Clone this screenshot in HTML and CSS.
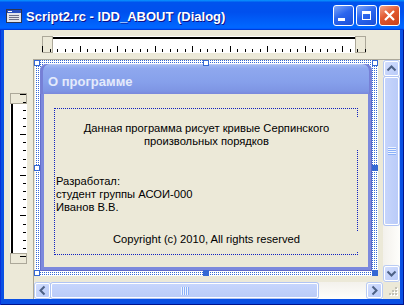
FILE: index.html
```html
<!DOCTYPE html>
<html lang="ru">
<head>
  <meta charset="UTF-8" />
  <title>Script2.rc - IDD_ABOUT (Dialog)</title>
  <link rel="stylesheet" href="styles.css">
</head>
<body>

  <div class="window">

    <!-- Title bar -->
    <div class="titlebar">
      <svg class="app-icon" width="16" height="16" viewBox="0 0 16 16" shape-rendering="crispEdges">
        <rect x="0.5" y="1.5" width="15" height="13" fill="#E4E4EA" stroke="#2E3550"/>
        <rect x="1" y="2" width="14" height="3" fill="#2A4FBE"/>
        <rect x="2" y="3" width="4" height="1" fill="#fff"/>
        <rect x="3" y="7" width="10" height="1" fill="#6E7088"/>
        <rect x="3" y="9" width="10" height="1" fill="#6E7088"/>
        <rect x="3" y="11" width="10" height="1" fill="#6E7088"/>
      </svg>
      <span class="title">Script2.rc - IDD_ABOUT (Dialog)</span>
      <div class="caption-buttons">
        <div class="cap-btn"><span class="glyph-min"></span></div>
        <div class="cap-btn"><span class="glyph-max"></span></div>
        <div class="cap-btn close">
          <svg width="21" height="21" viewBox="0 0 21 21">
            <path d="M6 6l9 9M15 6l-9 9" stroke="#fff" stroke-width="2.2" fill="none"/>
          </svg>
        </div>
      </div>
    </div>

    <!-- Client -->
    <div class="client">
      <div class="corner"></div>

      <div class="hruler-cell">
        <svg class="hruler" width="324" height="17" viewBox="0 0 324 17" shape-rendering="crispEdges">
          <defs>
            <pattern id="hticks" width="75" height="17" patternUnits="userSpaceOnUse">
              <path fill="#000" d="M0 10h1v6h-1z M8 13h1v3h-1z M15 13h1v3h-1z M23 13h1v3h-1z M30 13h1v3h-1z M38 10h1v6h-1z M45 13h1v3h-1z M53 13h1v3h-1z M60 13h1v3h-1z M68 13h1v3h-1z"/>
            </pattern>
          </defs>
          <rect width="324" height="17" fill="#fff"/>
          <rect x="0.5" y="0.5" width="10" height="16" fill="#ECE9D8" stroke="#ACA899"/>
          <rect x="313.5" y="0.5" width="10" height="16" fill="#ECE9D8" stroke="#ACA899"/>
          <rect x="11" y="1" width="302" height="2" fill="#000"/>
          <rect width="324" height="17" fill="url(#hticks)"/>
        </svg>
      </div>

      <div class="vruler-cell">
        <svg class="vruler" width="17" height="171" viewBox="0 0 17 171" shape-rendering="crispEdges">
          <rect width="17" height="171" fill="#fff"/>
          <rect x="0.5" y="0.5" width="16" height="10" fill="#ECE9D8" stroke="#ACA899"/>
          <rect x="0.5" y="160.5" width="16" height="10" fill="#ECE9D8" stroke="#ACA899"/>
          <rect x="1" y="11" width="2" height="149" fill="#000"/>
          <path fill="#000" d="M10 1h6v1h-6z M13 9h3v1h-3z M13 17h3v1h-3z M13 25h3v1h-3z M13 33h3v1h-3z M10 41h6v1h-6z M13 49h3v1h-3z M13 57h3v1h-3z M13 66h3v1h-3z M13 74h3v1h-3z M10 82h6v1h-6z M13 90h3v1h-3z M13 98h3v1h-3z M13 106h3v1h-3z M13 114h3v1h-3z M10 122h6v1h-6z M13 131h3v1h-3z M13 139h3v1h-3z M13 147h3v1h-3z M13 155h3v1h-3z M10 163h6v1h-6z"/>
        </svg>
      </div>

      <!-- Editor view -->
      <div class="view">
        <div class="canvas">
          <div class="selection">
            <span class="handle h-tl"></span>
            <span class="handle h-tm"></span>
            <span class="handle h-tr"></span>
            <span class="handle h-ml"></span>
            <span class="handle h-bl"></span>
            <span class="handle filled h-mr"></span>
            <span class="handle filled h-bm"></span>
            <span class="handle filled h-br"></span>

            <div class="dialog">
              <div class="dlg-caption">О программе</div>
              <div class="dlg-body">
                <div class="group"></div>
                <p class="static s-about">Данная программа рисует кривые Серпинского<br>произвольных порядков</p>
                <p class="static s-author">Разработал:<br>студент группы АСОИ-000<br>Иванов В.В.</p>
                <p class="static s-copy">Copyright (c) 2010, All rights reserved</p>
              </div>
            </div>
          </div>
        </div>

        <div class="vscroll">
          <div class="sb-btn">
            <svg width="15" height="15" viewBox="0 0 15 15"><path d="M3.5 9.5l4-4 4 4" stroke="#4D6185" stroke-width="2" fill="none"/></svg>
          </div>
          <div class="sb-thumb v"><span class="grip-v"></span></div>
          <div class="sb-track"></div>
          <div class="sb-btn">
            <svg width="15" height="15" viewBox="0 0 15 15"><path d="M3.5 5.5l4 4 4-4" stroke="#4D6185" stroke-width="2" fill="none"/></svg>
          </div>
        </div>

        <div class="hscroll">
          <div class="sb-btn">
            <svg width="15" height="15" viewBox="0 0 15 15"><path d="M9.5 3.5l-4 4 4 4" stroke="#4D6185" stroke-width="2" fill="none"/></svg>
          </div>
          <div class="sb-thumb h"><span class="grip-h"></span></div>
          <div class="sb-track"></div>
          <div class="sb-btn">
            <svg width="15" height="15" viewBox="0 0 15 15"><path d="M5.5 3.5l4 4-4 4" stroke="#4D6185" stroke-width="2" fill="none"/></svg>
          </div>
        </div>

        <div class="size-grip">
          <svg width="17" height="17" viewBox="0 0 17 17" shape-rendering="crispEdges">
            <path fill="#fff" d="M13 6h2v2h-2z M10 9h2v2h-2z M13 9h2v2h-2z M7 12h2v2h-2z M10 12h2v2h-2z M13 12h2v2h-2z"/>
            <path fill="#C3C1B5" d="M12 5h2v2h-2z M9 8h2v2h-2z M12 8h2v2h-2z M6 11h2v2h-2z M9 11h2v2h-2z M12 11h2v2h-2z"/>
          </svg>
        </div>
      </div>
    </div>
  </div>

</body>
</html>
```

FILE: styles.css
```css
* {
  box-sizing: border-box;
  margin: 0;
  padding: 0;
}

body {
  width: 404px;
  height: 305px;
  overflow: hidden;
  font-family: 'Liberation Sans', Arial, sans-serif;
}

.window {
  width: 404px;
  height: 305px;
  display: flex;
  flex-direction: column;
  background: #0A50E4;
  box-shadow: inset 1px 0 #0831D9, inset -1px 0 #00138C, inset 0 -1px #00138C;
}

/* Title bar */
.titlebar {
  height: 30px;
  display: flex;
  align-items: center;
  padding: 1px 4px 0 6px;
  background: linear-gradient(180deg, #0997FF, #0053EE 8%, #0050EE 40%, #0066FF 88%, #0066FF 93%, #005BFF 95%, #003DD7 96%, #003DD7);
}

.app-icon {
  flex: none;
  margin-right: 4px;
}

.title {
  flex: 1;
  color: #fff;
  font-size: 13px;
  font-weight: bold;
  padding-top: 2px;
  text-shadow: 1px 1px #0F1089;
  white-space: nowrap;
}

.caption-buttons {
  display: flex;
  gap: 2px;
}

.cap-btn {
  position: relative;
  width: 21px;
  height: 21px;
  border: 1px solid #fff;
  border-radius: 3px;
  background: linear-gradient(150deg, #7EA6F8, #2C66EE 45%, #1A4ED8);
}

.cap-btn.close {
  background: linear-gradient(150deg, #F4A68C, #E2582F 45%, #C8401A);
}

.cap-btn.close svg {
  position: absolute;
  left: -1px;
  top: -1px;
}

.glyph-min {
  position: absolute;
  left: 4px;
  bottom: 4px;
  width: 7px;
  height: 3px;
  background: #fff;
}

.glyph-max {
  position: absolute;
  left: 5px;
  top: 5px;
  width: 9px;
  height: 9px;
  border: 1px solid #fff;
  border-top-width: 3px;
}

/* Client area */
.client {
  flex: 1;
  margin: 0 4px 6px;
  background: #ECE9D8;
  display: grid;
  grid-template-columns: 29px 1fr;
  grid-template-rows: 29px 1fr;
}

.hruler-cell {
  padding: 6px 0 0 9px;
}

.vruler-cell {
  padding: 34px 0 0 6px;
}

.hruler, .vruler {
  display: block;
}

/* Editor view with scrollbars */
.view {
  border-left: 1px solid #ACA899;
  border-top: 1px solid #ACA899;
  display: grid;
  grid-template-columns: 1fr 17px;
  grid-template-rows: 1fr 17px;
  min-height: 0;
}

.canvas {
  background: #ECE9D8;
  overflow: hidden;
  padding-left: 1px;
}

.selection {
  position: relative;
  width: 343px;
  height: 216px;
  padding: 4px 6px 5px 5px;
  background-color: #fff;
  background-image: conic-gradient(#3568D4 25%, transparent 0);
  background-size: 2px 2px;
}

.handle {
  position: absolute;
  width: 6px;
  height: 6px;
  background: #fff;
  border: 1px solid #3568D4;
  z-index: 2;
}

.handle.filled {
  background: #3568D4;
}

.h-tl { left: -1px; top: 0; }
.h-tm { left: 168px; top: 0; }
.h-tr { right: 0; top: 0; }
.h-ml { left: -1px; top: 105px; }
.h-mr { right: 0; top: 105px; }
.h-bl { left: -1px; bottom: 0; }
.h-bm { left: 168px; bottom: 0; }
.h-br { right: 0; bottom: 0; }

/* The dialog being edited */
.dialog {
  height: 100%;
  display: flex;
  flex-direction: column;
  border-radius: 7px 7px 0 0;
  background: #7C89DD;
  box-shadow: inset 1px 0 #6670CC, inset -1px 0 #5F68C6, inset 0 -1px #5F68C6;
}

.dlg-caption {
  height: 30px;
  padding: 6px 0 0 8px;
  line-height: 24px;
  font-size: 13px;
  font-weight: bold;
  color: #E4EAFB;
  border-radius: 7px 7px 0 0;
  background: linear-gradient(180deg, #A9BDF3, #8FA8EE 15%, #86A0EB 60%, #7E95E4 90%, #7A88DC);
  box-shadow: inset 3px 0 #7680D6, inset -3px 0 #7680D6, inset 0 1px #B8C8F5;
}

.dlg-body {
  flex: 1;
  position: relative;
  margin: 0 4px 4px;
  background: #ECE9D8;
  font-size: 11.2px;
  line-height: 13px;
  color: #000;
}

.group {
  position: absolute;
  left: 10px;
  top: 14px;
  width: 304px;
  height: 147px;
  border: 1px dotted #1020C0;
}

.static {
  position: absolute;
  left: 11px;
  width: 303px;
  background: #ECE9D8;
}

.s-about {
  top: 24px;
  height: 31px;
  padding-top: 4px;
  text-align: center;
}

.s-author {
  left: 12px;
  top: 81px;
  width: 180px;
}

.s-copy {
  top: 138px;
  height: 19px;
  padding-top: 1px;
  text-align: center;
}

/* Scrollbars */
.vscroll, .hscroll {
  display: flex;
  background: linear-gradient(90deg, #F3F1EC, #FEFEFB);
  padding: 1px;
  gap: 1px;
}

.vscroll {
  flex-direction: column;
}

.hscroll {
  background: linear-gradient(180deg, #F3F1EC, #FEFEFB);
}

.sb-btn {
  flex: none;
  width: 15px;
  height: 15px;
  border: 1px solid #fff;
  border-radius: 2px;
  background: linear-gradient(135deg, #D3DEFD, #B9CBF9);
  box-shadow: 0 0 0 1px #B9CBF3;
}

.sb-btn svg {
  display: block;
  margin: -1px;
}

.sb-thumb {
  display: flex;
  align-items: center;
  justify-content: center;
  border: 1px solid #fff;
  border-radius: 2px;
  background: linear-gradient(90deg, #C6D5FC, #BACBF8);
  box-shadow: 0 0 0 1px #B0C4F4;
}

.sb-thumb.v {
  height: 148px;
}

.sb-thumb.h {
  width: 267px;
  background: linear-gradient(180deg, #C6D5FC, #BACBF8);
}

.sb-track {
  flex: 1;
}

.grip-v {
  width: 8px;
  height: 8px;
  background: repeating-linear-gradient(180deg, #EEF4FE 0 1px, #8CB0F8 1px 2px);
}

.grip-h {
  width: 8px;
  height: 8px;
  background: repeating-linear-gradient(90deg, #EEF4FE 0 1px, #8CB0F8 1px 2px);
}

.size-grip {
  background: #ECE9D8;
}

.size-grip svg {
  display: block;
}
```
